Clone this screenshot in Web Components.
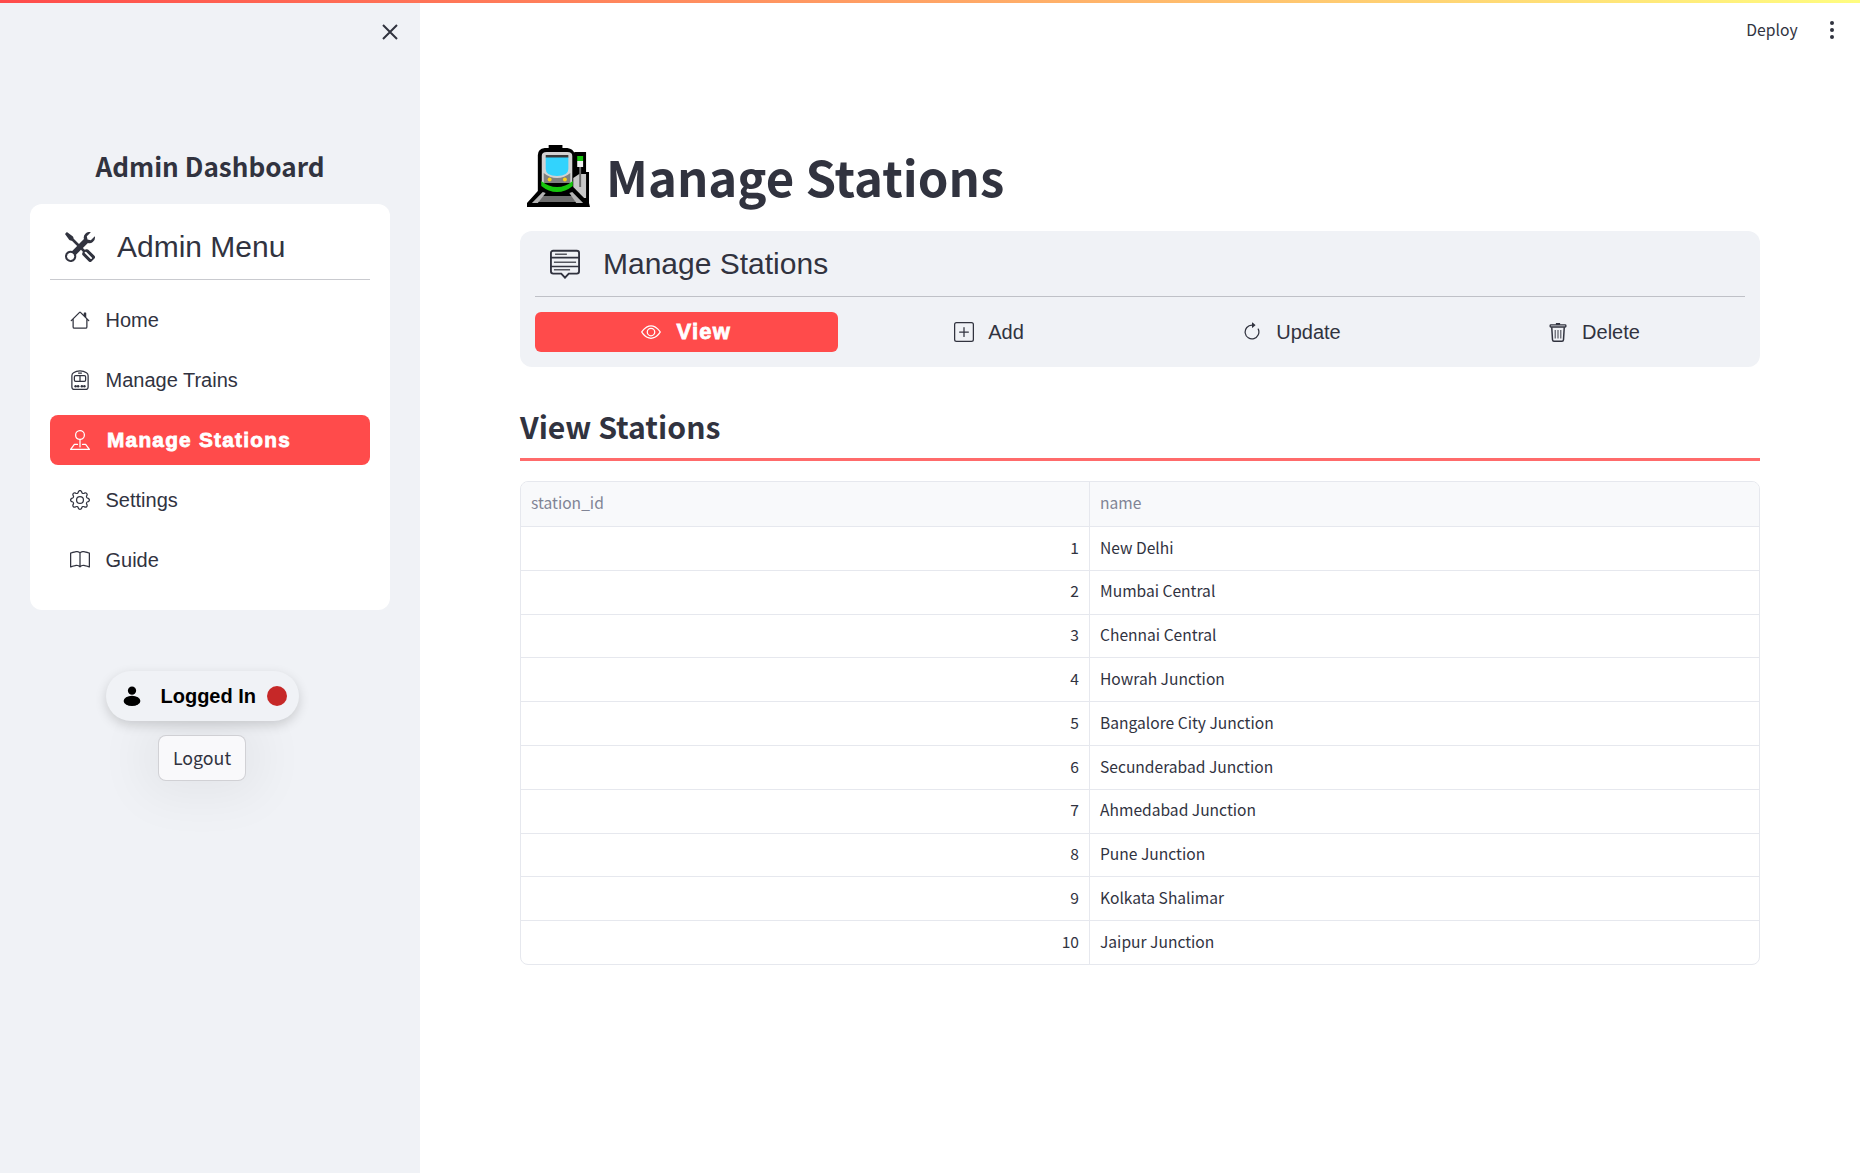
<!DOCTYPE html>
<html lang="en">
<head>
<meta charset="utf-8">
<title>Manage Stations</title>
<style>
  html, body { margin: 0; height: 100%; background: #fff; overflow: hidden; }
  body { font-family: "Noto Sans CJK SC", "Noto Sans", sans-serif; color: #31333f; }
</style>
</head>
<body>
<admin-app></admin-app>

<script>
const ICONS = {
    tools: '<path d="M1 0 0 1l2.2 3.081a1 1 0 0 0 .815.419h.07a1 1 0 0 1 .708.293l2.675 2.675-2.617 2.654A3.003 3.003 0 0 0 0 13a3 3 0 1 0 5.878-.851l2.654-2.617.968.968-.305.914a1 1 0 0 0 .242 1.023l3.27 3.27a.997.997 0 0 0 1.414 0l1.586-1.586a.997.997 0 0 0 0-1.414l-3.27-3.27a1 1 0 0 0-1.023-.242L10.5 9.5l-.96-.96 2.68-2.643A3.005 3.005 0 0 0 16 3c0-.269-.035-.53-.102-.777l-2.14 2.141L12 4l-.364-1.757L13.777.102a3 3 0 0 0-3.675 3.68L7.462 6.46 4.793 3.793a1 1 0 0 1-.293-.707v-.071a1 1 0 0 0-.419-.814L1 0Zm9.646 10.646a.5.5 0 0 1 .708 0l2.914 2.915a.5.5 0 0 1-.707.707l-2.915-2.914a.5.5 0 0 1 0-.708ZM3 11l.471.242.529.026.287.445.445.287.026.529L5 13l-.242.471-.026.529-.445.287-.287.445-.529.026L3 15l-.471-.242L2 14.732l-.287-.445L1.268 14l-.026-.529L1 13l.242-.471.026-.529.445-.287.287-.445.529-.026L3 11Z"/>',
    house: '<path d="M8.707 1.5a1 1 0 0 0-1.414 0L.646 8.146a.5.5 0 0 0 .708.708L2 8.207V13.5A1.5 1.5 0 0 0 3.5 15h9a1.5 1.5 0 0 0 1.5-1.5V8.207l.646.647a.5.5 0 0 0 .708-.708L13 5.793V2.5a.5.5 0 0 0-.5-.5h-1a.5.5 0 0 0-.5.5v1.293L8.707 1.5ZM13 7.207V13.5a.5.5 0 0 1-.5.5h-9a.5.5 0 0 1-.5-.5V7.207l5-5 5 5Z"/>',
    train: '<g fill="none" stroke="currentColor"><path d="M1.5 4.6c0-1 .5-1.9 1.3-2.4C5.8.1 10.200.1 13.200 2.200c.8.5 1.300 1.400 1.300 2.400v8.900a2 2 0 0 1-2 2h-9a2 2 0 0 1-2-2z"/><rect x="3.500" y="4.500" width="9" height="4.500" rx="1"/><path d="M8 4.500V9M6.500 2.500h3"/></g><circle cx="4.500" cy="13" r="1"/><circle cx="6.500" cy="13" r="1"/><circle cx="9.500" cy="13" r="1"/><circle cx="11.500" cy="13" r="1"/>',
    pin: '<path d="M3.100 11.200a.5.5 0 0 1 .4-.2H6a.5.5 0 0 1 0 1H3.750L1.500 15h13l-2.250-3H10a.5.5 0 0 1 0-1h2.500a.5.5 0 0 1 .4.2l3 4a.5.5 0 0 1-.4.8H.5a.5.5 0 0 1-.4-.8l3-4z"/><path fill-rule="evenodd" d="M8 1a3 3 0 1 0 0 6 3 3 0 0 0 0-6zM4 4a4 4 0 1 1 4.500 3.969V13.500a.5.5 0 0 1-1 0V7.970A4 4 0 0 1 4 4z"/>',
    gear: '<path d="M8 4.754a3.246 3.246 0 1 0 0 6.492 3.246 3.246 0 0 0 0-6.492zM5.754 8a2.246 2.246 0 1 1 4.492 0 2.246 2.246 0 0 1-4.492 0z"/><path d="M9.796 1.343c-.527-1.790-3.065-1.790-3.592 0l-.094.319a.873.873 0 0 1-1.255.52l-.292-.16c-1.640-.892-3.433.902-2.540 2.541l.159.292a.873.873 0 0 1-.52 1.255l-.319.094c-1.790.527-1.790 3.065 0 3.592l.319.094a.873.873 0 0 1 .52 1.255l-.16.292c-.892 1.640.901 3.434 2.541 2.540l.292-.159a.873.873 0 0 1 1.255.52l.094.319c.527 1.790 3.065 1.790 3.592 0l.094-.319a.873.873 0 0 1 1.255-.52l.292.16c1.640.893 3.434-.902 2.540-2.541l-.159-.292a.873.873 0 0 1 .52-1.255l.319-.094c1.790-.527 1.790-3.065 0-3.592l-.319-.094a.873.873 0 0 1-.52-1.255l.16-.292c.893-1.640-.902-3.433-2.541-2.540l-.292.159a.873.873 0 0 1-1.255-.52l-.094-.319zm-2.633.283c.246-.835 1.428-.835 1.674 0l.094.319a1.873 1.873 0 0 0 2.693 1.115l.291-.16c.764-.415 1.600.42 1.184 1.185l-.159.292a1.873 1.873 0 0 0 1.116 2.692l.318.094c.835.246.835 1.428 0 1.674l-.319.094a1.873 1.873 0 0 0-1.115 2.693l.16.291c.415.764-.42 1.600-1.185 1.184l-.291-.159a1.873 1.873 0 0 0-2.693 1.116l-.094.318c-.246.835-1.428.835-1.674 0l-.094-.319a1.873 1.873 0 0 0-2.692-1.115l-.292.16c-.764.415-1.600-.42-1.184-1.185l.159-.291A1.873 1.873 0 0 0 1.945 8.930l-.319-.094c-.835-.246-.835-1.428 0-1.674l.319-.094A1.873 1.873 0 0 0 3.060 4.377l-.16-.292c-.415-.764.42-1.600 1.185-1.184l.292.159a1.873 1.873 0 0 0 2.692-1.115l.094-.319z"/>',
    book: '<path d="M1 2.828c.885-.37 2.154-.769 3.388-.893 1.330-.134 2.458.063 3.112.752v9.746c-.935-.53-2.120-.603-3.213-.493-1.180.12-2.370.461-3.287.811V2.828zm7.500-.141c.654-.689 1.782-.886 3.112-.752 1.234.124 2.503.523 3.388.893v9.923c-.918-.35-2.107-.692-3.287-.81-1.094-.111-2.278-.039-3.213.492V2.687zM8 1.783C7.015.936 5.587.81 4.287.94c-1.514.153-3.042.672-3.994 1.105A.5.5 0 0 0 0 2.500v11a.5.5 0 0 0 .707.455c.882-.4 2.303-.881 3.680-1.020 1.409-.142 2.590.087 3.223.877a.5.5 0 0 0 .78 0c.633-.79 1.814-1.019 3.222-.877 1.378.139 2.800.62 3.681 1.020A.5.5 0 0 0 16 13.500v-11a.5.5 0 0 0-.293-.455c-.952-.433-2.480-.952-3.994-1.105C10.413.809 8.985.936 8 1.783z"/>',
    eye: '<path d="M16 8s-3-5.500-8-5.500S0 8 0 8s3 5.500 8 5.500S16 8 16 8zM1.173 8a13.133 13.133 0 0 1 1.660-2.043C4.120 4.668 5.880 3.500 8 3.500c2.120 0 3.879 1.168 5.168 2.457A13.133 13.133 0 0 1 14.828 8c-.058.087-.122.183-.195.288-.335.48-.83 1.120-1.465 1.755C11.879 11.332 10.119 12.500 8 12.500c-2.120 0-3.879-1.168-5.168-2.457A13.134 13.134 0 0 1 1.172 8z"/><path d="M8 5.500a2.500 2.500 0 1 0 0 5 2.500 2.500 0 0 0 0-5zM4.500 8a3.500 3.500 0 1 1 7 0 3.500 3.500 0 0 1-7 0z"/>',
    plus: '<path d="M14 1a1 1 0 0 1 1 1v12a1 1 0 0 1-1 1H2a1 1 0 0 1-1-1V2a1 1 0 0 1 1-1h12zM2 0a2 2 0 0 0-2 2v12a2 2 0 0 0 2 2h12a2 2 0 0 0 2-2V2a2 2 0 0 0-2-2H2z"/><path d="M8 4a.5.5 0 0 1 .5.5v3h3a.5.5 0 0 1 0 1h-3v3a.5.5 0 0 1-1 0v-3h-3a.5.5 0 0 1 0-1h3v-3A.5.5 0 0 1 8 4z"/>',
    update: '<path fill-rule="evenodd" d="M8 3a5 5 0 1 0 4.546 2.914.5.5 0 0 1 .908-.417A6 6 0 1 1 8 2v1z"/><path d="M8 4.466V.534a.25.25 0 0 1 .41-.192l2.360 1.966c.12.1.12.284 0 .384L8.410 4.658A.25.25 0 0 1 8 4.466z"/>',
    trash: '<path d="M6.300 .8h3.400v1.500H6.300z"/><rect x="1.700" y="2.300" width="12.600" height="1.700" rx=".6" fill="none" stroke="currentColor" stroke-width="1.100"/><path d="M3 4.200l.6 10c.06.8.5 1.200 1.200 1.200h6.400c.7 0 1.140-.4 1.200-1.200l.6-10" fill="none" stroke="currentColor" stroke-width="1.200"/><path d="M5.800 6.300v6.800M8 6.300v6.800M10.200 6.300v6.800" stroke="#6c6e78" stroke-width="1.100"/>',
    list: '<g fill="none" stroke="currentColor"><path d="M1.700.9h12.600c.7 0 1.200.5 1.200 1.200v9.800c0 .7-.5 1.200-1.200 1.200H10l-2 2.200-2-2.200H1.700c-.7 0-1.200-.5-1.200-1.200V2.100C.5 1.400 1 .9 1.700.9z" stroke-width="1"/><path d="M.5 4.600h15M.5 9.300h15" stroke-width=".8"/><path d="M2.700 2.800H9M2.100 7h11.800M2.100 11.100h8.600" stroke-width=".8" stroke="#55575f"/></g>',
    user: '<circle cx="8" cy="3.700" r="3.300"/><ellipse cx="8" cy="11.900" rx="6.700" ry="4.100"/>'
};

function icon(name, size) {
    return `<svg xmlns="http://www.w3.org/2000/svg" width="${size}" height="${size}" viewBox="0 0 16 16" fill="currentColor" aria-hidden="true" style="display:block;flex:none">${ICONS[name]}</svg>`;
}

class NavItem extends HTMLElement {
    connectedCallback() {
        const active = this.hasAttribute('active');
        this.attachShadow({ mode: 'open' }).innerHTML = `
        <style>
            :host { display: block; }
            .item {
                display: flex;
                align-items: center;
                gap: 15.5px;
                height: 50px;
                padding-left: 20px;
                border-radius: 8px;
                font: 20px "Liberation Sans", Arial, sans-serif;
                color: #31333f;
            }
            .item.active {
                background: #ff4b4b;
                color: #fff;
                gap: 17px;
                font-size: 20.8px;
                font-weight: 700;
                letter-spacing: 1.25px;
                -webkit-text-stroke: .8px #fff;
            }
        </style>
        <div class="item ${active ? 'active' : ''}">${icon(this.getAttribute('icon'), 20)}<span><slot></slot></span></div>`;
    }
}

class AdminMenu extends HTMLElement {
    connectedCallback() {
        this.attachShadow({ mode: 'open' }).innerHTML = `
        <style>
            :host {
                display: block;
                background: #fff;
                border-radius: 12px;
                padding: 0 20px 25px;
            }
            header {
                display: flex;
                align-items: center;
                gap: 22px;
                height: 65px;
                padding: 10px 0 0 15px;
                border-bottom: 1px solid #c9cacf;
                font: 30px "Liberation Sans", Arial, sans-serif;
                color: #31333f;
            }
            nav { display: grid; gap: 10px; padding-top: 15px; }
        </style>
        <header>${icon('tools', 30)}<span>${this.getAttribute('heading')}</span></header>
        <nav><slot></slot></nav>`;
    }
}

class LoginStatus extends HTMLElement {
    connectedCallback() {
        this.attachShadow({ mode: 'open' }).innerHTML = `
        <style>
            :host {
                display: flex;
                flex-direction: column;
                align-items: center;
                gap: 14px;
            }
            .pill {
                display: flex;
                align-items: center;
                width: 193px;
                height: 50px;
                box-sizing: border-box;
                padding: 0 12px 0 16px;
                border-radius: 25px;
                background: #f0f2f6;
                box-shadow: 0 4px 12px rgba(0, 0, 0, .16);
                color: #000;
                font: 700 20px "Liberation Sans", Arial, sans-serif;
                position: relative;
            }
            .pill span { margin-left: 19px; flex: 1; white-space: nowrap; }
            .dot { width: 20px; height: 20px; border-radius: 50%; background: #c62828; flex: none; }
            button {
                width: 88px;
                height: 46px;
                padding: 0 0 2px;
                border: 1px solid rgba(49, 51, 63, .2);
                border-radius: 8px;
                background: #f9f9fb;
                color: #31333f;
                font: 17.8px "Noto Sans CJK SC", "Noto Sans", sans-serif;
                box-shadow: 0 0 50px 16px rgba(0, 0, 0, .05);
            }
        </style>
        <div class="pill">${icon('user', 20)}<span>Logged In</span><i class="dot"></i></div>
        <button type="button">Logout</button>`;
    }
}

class AdminSidebar extends HTMLElement {
    connectedCallback() {
        this.attachShadow({ mode: 'open' }).innerHTML = `
        <style>
            :host {
                display: block;
                flex: none;
                width: 420px;
                height: 100%;
                box-sizing: border-box;
                padding: 146px 30px 0;
                background: #f0f2f6;
                position: relative;
            }
            h2 {
                margin: 0 0 18px;
                font: 600 26.1px/40px "Noto Sans CJK SC", "Noto Sans", sans-serif;
                color: #31333f;
                text-align: center;
            }
            .close {
                position: absolute;
                top: 24px;
                right: 22px;
                color: #31333f;
            }
            ::slotted(login-status) { margin: 61px 16px 0 0; }
        </style>
        <div class="close"><svg width="16" height="16" viewBox="0 0 16 16" style="display:block"><path d="M1 1l14 14M15 1 1 15" stroke="currentColor" stroke-width="2"/></svg></div>
        <h2>${this.getAttribute('heading')}</h2>
        <slot></slot>`;
    }
}

class TabItem extends HTMLElement {
    connectedCallback() {
        this.attachShadow({ mode: 'open' }).innerHTML = `
        <style>
            :host {
                display: flex;
                align-items: center;
                justify-content: center;
                gap: 14.5px;
                height: 40px;
                border-radius: 6px;
                font: 20px "Liberation Sans", Arial, sans-serif;
                color: #31333f;
            }
            :host([active]) {
                background: #ff4b4b;
                color: #fff;
                gap: 15px;
                font-size: 22px;
                font-weight: 700;
                letter-spacing: 1.2px;
                -webkit-text-stroke: .8px #fff;
            }
        </style>
        ${icon(this.getAttribute('icon'), 20)}<span><slot></slot></span>`;
    }
}

class TabPanel extends HTMLElement {
    connectedCallback() {
        this.attachShadow({ mode: 'open' }).innerHTML = `
        <style>
            :host {
                display: block;
                padding: 0 15px 15px;
                background: #f0f2f6;
                border-radius: 12px;
            }
            header {
                display: flex;
                align-items: center;
                gap: 23px;
                height: 65px;
                padding-left: 15px;
                border-bottom: 1px solid #bfc1c7;
                font: 30px "Liberation Sans", Arial, sans-serif;
                color: #31333f;
            }
            .tabs { display: grid; grid-template-columns: repeat(4, 1fr); margin-top: 15px; }
        </style>
        <header>${icon('list', 30)}<span>${this.getAttribute('heading')}</span></header>
        <div class="tabs"><slot></slot></div>`;
    }
}

class DataTable extends HTMLElement {
    connectedCallback() {
        const rows = JSON.parse(this.getAttribute('rows'));
        const body = rows.map(([id, name]) => `
            <div class="cell num">${id}</div><div class="cell">${name}</div>`).join('');
        this.attachShadow({ mode: 'open' }).innerHTML = `
        <style>
            :host {
                display: grid;
                grid-template-columns: 569px 1fr;
                grid-template-rows: 44px repeat(${rows.length}, 43.8px);
                border: 1px solid #e6e8ee;
                border-radius: 8px;
                overflow: hidden;
                font: 15.6px/1 "Noto Sans CJK SC", "Noto Sans", sans-serif;
                color: #31333f;
            }
            .cell {
                display: flex;
                align-items: center;
                padding: 0 10px 2px;
                box-sizing: border-box;
                border-top: 1px solid #e6e8ee;
                white-space: nowrap;
            }
            .num { justify-content: flex-end; border-right: 1px solid #e6e8ee; }
            .head { background: #f8f9fb; color: #808495; border-top: 0; }
            .head.first { border-right: 1px solid #e6e8ee; }
        </style>
        <div class="cell head first">station_id</div><div class="cell head">name</div>
        ${body}`;
    }
}

class AdminApp extends HTMLElement {
    connectedCallback() {
        const stations = ['New Delhi', 'Mumbai Central', 'Chennai Central', 'Howrah Junction', 'Bangalore City Junction',
            'Secunderabad Junction', 'Ahmedabad Junction', 'Pune Junction', 'Kolkata Shalimar', 'Jaipur Junction'];
        const rows = JSON.stringify(stations.map((s, i) => [i + 1, s]));
        this.attachShadow({ mode: 'open' }).innerHTML = `
        <style>
            :host {
                display: flex;
                height: 1173px;
                width: 1860px;
                position: relative;
                overflow: hidden;
                font-family: "Noto Sans CJK SC", "Noto Sans", sans-serif;
                color: #31333f;
            }
            .stripe {
                position: absolute;
                inset: 0 0 auto 0;
                height: 3px;
                background: linear-gradient(90deg, #ff4b4b, #fffd80);
                z-index: 2;
            }
            .toolbar {
                position: absolute;
                top: 0;
                right: 0;
                height: 60px;
                display: flex;
                align-items: center;
                gap: 32px;
                padding-right: 26px;
                font-size: 15.7px;
            }
            .toolbar span { padding-bottom: 2px; }
            .dots { display: grid; gap: 2.4px; }
            .dots i { display: block; width: 4.4px; height: 4.4px; border-radius: 50%; background: #31333f; }
            main { flex: 1; padding: 131px 100px 0; min-width: 0; }
            .hero { display: flex; align-items: center; gap: 16px; height: 90px; margin: 0 0 10px 7px; }
            h1 { margin: 0; font: 700 49.1px/1.2 "Noto Sans CJK SC", "Noto Sans", sans-serif; color: #31333f; }
            h3 {
                margin: 0 0 20px;
                padding: 38px 0 11px;
                font: 600 30.2px/42px "Noto Sans CJK SC", "Noto Sans", sans-serif;
                color: #31333f;
                border-bottom: 3px solid #ff6b6b;
            }
        </style>
        <div class="stripe"></div>
        <admin-sidebar heading="Admin Dashboard">
            <admin-menu heading="Admin Menu">
                <nav-item icon="house">Home</nav-item>
                <nav-item icon="train">Manage Trains</nav-item>
                <nav-item icon="pin" active>Manage Stations</nav-item>
                <nav-item icon="gear">Settings</nav-item>
                <nav-item icon="book">Guide</nav-item>
            </admin-menu>
            <login-status></login-status>
        </admin-sidebar>
        <main>
            <div class="hero">
                <svg width="63" height="62" viewBox="0 0 64 62" preserveAspectRatio="none" style="flex:none;display:block" aria-hidden="true">
                    <path d="M0 58 11 46V10q0-6 7-7h4V0h14v3h5q6 1 7 5V7h12v20h3v31l1 4H0z" fill="#000"/>
                    <path d="M47 33l6-4h7v24h-2L47 42z" fill="#c8c8c8"/>
                    <path d="M53 22h2v20h-2z" fill="#6b6b6b"/>
                    <path d="M51 11h6v5h-6z" fill="#16c60c"/>
                    <path d="M51 16h6v6h-6z" fill="#f2f2f2"/>
                    <path d="M12 51h37v6H12z" fill="#6e6e6e"/>
                    <path d="M5 58 16 47l3 1-8 10zM57 58 46 47l-3 1 7 10z" fill="#b4b4b4"/>
                    <path d="M15 11q0-4 5-4h21q5 0 5 4v27H15z" fill="#d2d2d2"/>
                    <path d="M17 28q6 5 13.500 5T44 28v10H17z" fill="#808080"/>
                    <path d="M19 12h23v12q0 7-11.500 7T19 24z" fill="#32d3fd"/>
                    <path d="M19 10h23v2.500H19z" fill="#3a3a3a"/>
                    <path d="M14.500 36q7.500 6 16 6t16-6v5q-7.500 6-16 6t-16-6z" fill="#16c60c"/>
                    <circle cx="23" cy="34.500" r="2" fill="#fcd116"/><circle cx="38.500" cy="34.500" r="2" fill="#fcd116"/>
                </svg>
                <h1>Manage Stations</h1>
            </div>
            <tab-panel heading="Manage Stations">
                <tab-item icon="eye" active>View</tab-item>
                <tab-item icon="plus">Add</tab-item>
                <tab-item icon="update">Update</tab-item>
                <tab-item icon="trash">Delete</tab-item>
            </tab-panel>
            <h3>View Stations</h3>
            <data-table rows='${rows}'></data-table>
        </main>
        <div class="toolbar"><span>Deploy</span><div class="dots"><i></i><i></i><i></i></div></div>`;
    }
}

customElements.define('nav-item', NavItem);
customElements.define('admin-menu', AdminMenu);
customElements.define('login-status', LoginStatus);
customElements.define('admin-sidebar', AdminSidebar);
customElements.define('tab-item', TabItem);
customElements.define('tab-panel', TabPanel);
customElements.define('data-table', DataTable);
customElements.define('admin-app', AdminApp);
</script>
</body>
</html>
